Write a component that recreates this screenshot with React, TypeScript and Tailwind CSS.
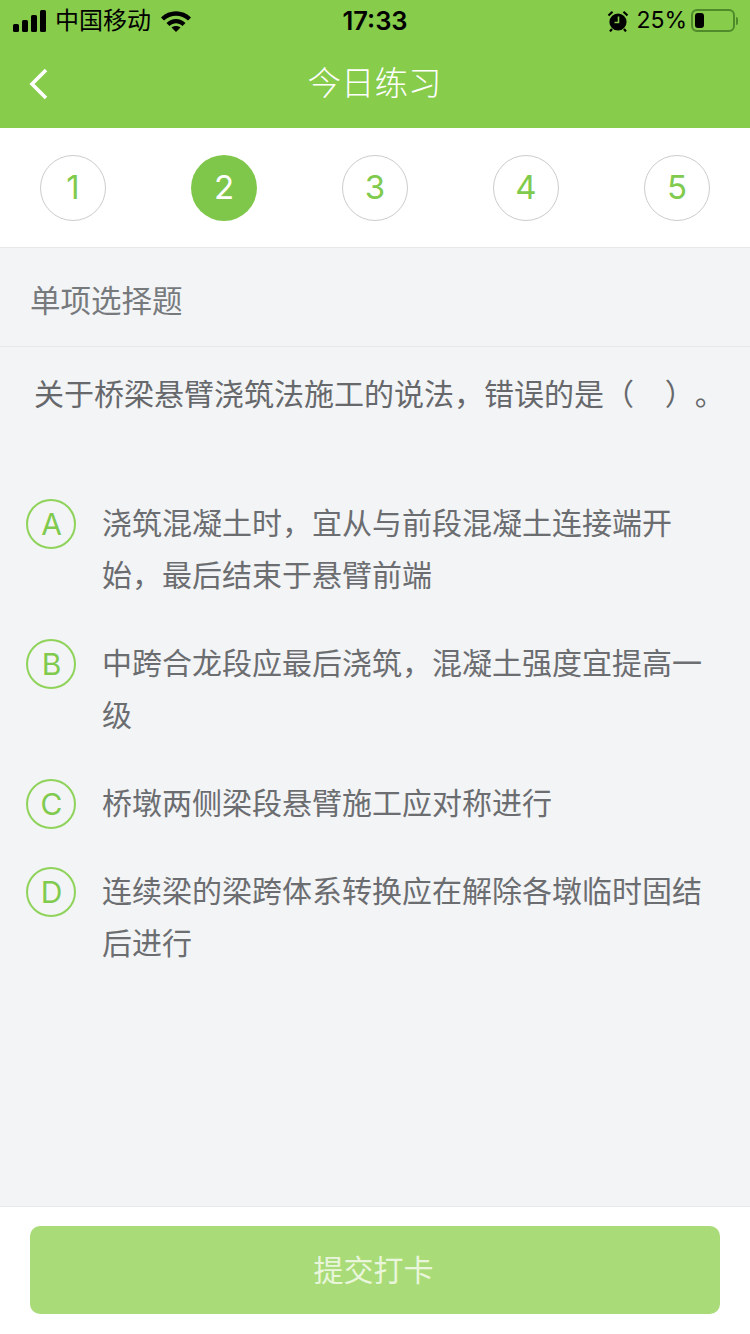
const cjk = "font-['Inter','Noto_Sans_CJK_SC',sans-serif]";

const steps = [1, 2, 3, 4, 5];
const options = [
  { key: "A", text: "浇筑混凝土时，宜从与前段混凝土连接端开始，最后结束于悬臂前端" },
  { key: "B", text: "中跨合龙段应最后浇筑，混凝土强度宜提高一级" },
  { key: "C", text: "桥墩两侧梁段悬臂施工应对称进行" },
  { key: "D", text: "连续梁的梁跨体系转换应在解除各墩临时固结后进行" },
];

function StatusBar() {
  return (
    <div className="relative flex h-10 items-center justify-between pl-[13px] pr-[12px] pt-[1px] text-black">
      <div className="flex items-center">
        <svg width="34" height="22" viewBox="0 0 34 22" className="mr-[8px]">
          <rect x="0" y="14" width="6" height="8" rx="1.5" fill="#000" />
          <rect x="9" y="10" width="6" height="12" rx="1.5" fill="#000" />
          <rect x="18" y="5" width="6" height="17" rx="1.5" fill="#000" />
          <rect x="27" y="0" width="6" height="22" rx="1.5" fill="#000" />
        </svg>
        <span className="text-[24px] leading-none">中国移动</span>
        <svg width="32" height="24" viewBox="0 0 32 24" className="ml-[9px]">
          <path d="M1 8.5C9 0 23 0 31 8.5L28 11.5C21.5 5 10.5 5 4 11.5Z" fill="#000" />
          <path d="M6.5 14C12 8.5 20 8.5 25.5 14L22.5 17C18.5 13.4 13.5 13.4 9.5 17Z" fill="#000" />
          <path d="M11.5 18.5C14 16.5 18 16.5 20.5 18.5L16 23Z" fill="#000" />
        </svg>
      </div>
      <span className="absolute left-0 right-0 text-center text-[25.5px] font-semibold leading-none">17:33</span>
      <div className="relative flex items-center">
        <svg width="22" height="22" viewBox="0 0 22 22" className="mr-[7px]">
          <circle cx="11" cy="12" r="8.6" fill="#000" />
          <path d="M1.5 5.5 5.5 1.8M20.5 5.5 16.5 1.8M5 19l-2 2.4M17 19l2 2.4" stroke="#000" strokeWidth="2.2" />
          <path d="M11.5 6.5V12.5H7.5" stroke="#87cc4b" strokeWidth="1.6" fill="none" />
        </svg>
        <span className="text-[23px] leading-none">25%</span>
        <div className="ml-[4px] flex h-[23px] w-[44px] items-center rounded-[6px] border-2 border-[#4f8a2b] p-[2px]">
          <div className="h-full w-[9px] rounded-[3px] bg-black" />
        </div>
        <div className="ml-[1px] h-[8px] w-[2px] rounded-r-full bg-[#4f8a2b]" />
      </div>
    </div>
  );
}

export default function App() {
  return (
    <div className={`${cjk} flex h-[1334px] w-[750px] flex-col overflow-hidden bg-[#f3f4f6]`}>
      <header className="h-[128px] bg-[#87cc4b]">
        <StatusBar />
        <div className="relative flex h-[88px] items-center justify-center">
          <svg width="20" height="32" viewBox="0 0 20 32" className="absolute left-[29px] top-[28px]">
            <path d="M17 2 3 16l14 14" fill="none" stroke="#fff" strokeWidth="3.6" />
          </svg>
          <h1 className="pr-[1px] text-[33.5px] font-light leading-none text-white">今日练习</h1>
        </div>
      </header>

      <nav className="flex h-[120px] items-center justify-between border-b border-[#e6e7e9] bg-white px-10 pt-[1px]">
        {steps.map((n) => (
          <div
            key={n}
            className={
              n === 2
                ? "flex h-[66px] w-[66px] items-center justify-center rounded-full bg-[#7fc74a] text-[33px] text-white"
                : "flex h-[66px] w-[66px] items-center justify-center rounded-full border border-[#cccccc] text-[33px] text-[#80ca4e]"
            }
          >
            {n}
          </div>
        ))}
      </nav>

      <div className="flex h-[99px] items-center border-b border-[#e6e7e9] px-[30px] pt-[8px] text-[30.5px] text-[#777a7d]">
        单项选择题
      </div>

      <main className="flex-1">
        <p className="whitespace-nowrap pl-[34px] pt-[21px] text-[30px] leading-[52px] text-[#66686b] [text-spacing-trim:space-all]">
          关于桥梁悬臂浇筑法施工的说法，错误的是（{"\u00a0\u00a0\u00a0\u2009"}）。
        </p>
        <ul className="flex flex-col gap-9 pt-[77px]">
          {options.map((o) => (
            <li key={o.key} className="flex pl-[26px] pr-[46px]">
              <span className="mr-[26px] mt-[2px] flex h-[50px] w-[50px] shrink-0 items-center justify-center rounded-full border-2 border-[#8fd35a] pl-[1px] text-[30px] text-[#80ca4e]">
                {o.key}
              </span>
              <span className="text-[30px] leading-[52px] text-[#6b6d70]">{o.text}</span>
            </li>
          ))}
        </ul>
      </main>

      <footer className="h-[128px] border-t border-[#e8e9eb] bg-white px-[30px] pt-[19px]">
        <button className="flex h-[88px] w-full items-center justify-center rounded-[10px] bg-[#a9dc78] pr-[3px] text-[30px] text-[#e9f6dc]">
          提交打卡
        </button>
      </footer>
    </div>
  );
}
